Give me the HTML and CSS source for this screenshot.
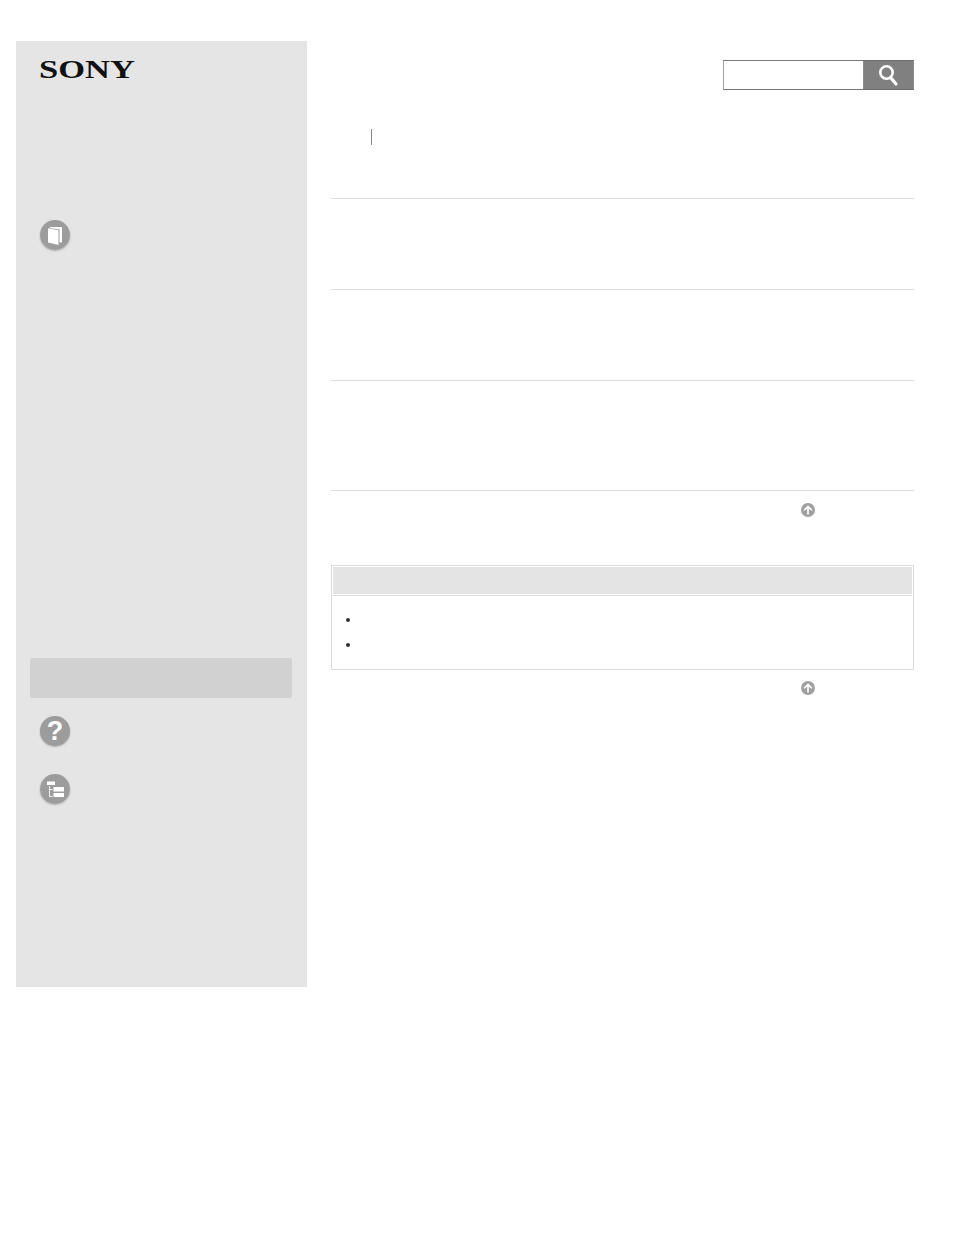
FILE: index.html
```html
<!DOCTYPE html>
<html lang="en">
<head>
    <meta charset="UTF-8">
    <meta name="viewport" content="width=device-width, initial-scale=1.0">
    <title>Help Guide</title>
    <link rel="stylesheet" href="styles.css">
</head>
<body>
    <div class="page">
        <div class="sidebar">
            <div class="logo">SONY</div>

            <div class="nav-icon nav-book">
                <svg width="30" height="30" viewBox="0 0 30 30">
                    <circle cx="15" cy="15" r="15" fill="#9c9c9c"/>
                    <path d="M10 7h12v15.500h-2.500V9.500L10 8z" fill="#ffffff"/>
                    <path d="M8 8.300 18.500 10.200V25L8 22.500z" fill="#ffffff"/>
                </svg>
            </div>

            <div class="side-bar-block"></div>

            <div class="nav-icon nav-help">
                <span class="help-mark">?</span>
            </div>

            <div class="nav-icon nav-tree">
                <svg width="30" height="30" viewBox="0 0 30 30">
                    <circle cx="15" cy="15" r="15" fill="#9c9c9c"/>
                    <rect x="7" y="7.500" width="8" height="3.500" fill="#ffffff"/>
                    <rect x="13.500" y="13" width="10.500" height="4.500" fill="#ffffff"/>
                    <rect x="13.500" y="19" width="10.500" height="4" fill="#ffffff"/>
                    <path d="M9.500 12v10.500h3M9.500 15.500h3" fill="none" stroke="#f0f0f0" stroke-width="1"/>
                </svg>
            </div>
        </div>

        <div class="main">
            <div class="search">
                <div class="search-input"></div>
                <div class="search-btn">
                    <svg width="22" height="24" viewBox="0 0 22 24">
                        <circle cx="8.500" cy="9.500" r="6.200" fill="none" stroke="#ffffff" stroke-width="2.600"/>
                        <path d="M13 15l5 6" stroke="#ffffff" stroke-width="3.200" stroke-linecap="round"/>
                    </svg>
                </div>
            </div>

            <div class="crumbs"><span class="crumb-divider"></span></div>

            <div class="topic topic-first"></div>
            <div class="topic"></div>
            <div class="topic topic-tall"></div>

            <div class="to-top">
                <svg width="14" height="14" viewBox="0 0 14 14">
                    <circle cx="7" cy="7" r="7" fill="#a0a0a0"/>
                    <path d="M7 11.500V3.500M3.200 7.200 7 3.400 10.800 7.200" fill="none" stroke="#ffffff" stroke-width="1.600"/>
                </svg>
            </div>

            <div class="note">
                <div class="note-head"></div>
                <ul class="note-list">
                    <li class="note-item"></li>
                    <li class="note-item"></li>
                </ul>
            </div>

            <div class="to-top to-top-last">
                <svg width="14" height="14" viewBox="0 0 14 14">
                    <circle cx="7" cy="7" r="7" fill="#a0a0a0"/>
                    <path d="M7 11.500V3.500M3.200 7.200 7 3.400 10.800 7.200" fill="none" stroke="#ffffff" stroke-width="1.600"/>
                </svg>
            </div>
        </div>
    </div>
</body>
</html>
```

FILE: styles.css
```css
body {
    margin: 0;
    background-color: #ffffff;
    font-family: "Liberation Sans", Arial, sans-serif;
    color: #333333;
}

.page {
    display: flex;
    gap: 24px;
    padding: 41px 40px 0 16px;
}

/* Sidebar */
.sidebar {
    width: 291px;
    height: 946px;
    flex-shrink: 0;
    background-color: #e5e5e5;
    box-sizing: border-box;
    padding: 17px 15px 0 14px;
}

.logo {
    height: 24px;
    margin-left: 9px;
    font-family: "Liberation Serif", serif;
    font-size: 25px;
    font-weight: bold;
    line-height: 24px;
    color: #111111;
    transform: scaleX(1.38);
    transform-origin: left center;
}

.nav-icon {
    width: 30px;
    height: 30px;
    margin-left: 10px;
    border-radius: 50%;
    box-shadow: 0 1px 2px rgba(0, 0, 0, 0.25);
}

.nav-book {
    margin-top: 138px;
}

.side-bar-block {
    height: 40px;
    margin-top: 408px;
    background-color: #d1d1d1;
    border-radius: 2px;
}

.nav-help {
    margin-top: 18px;
    background-color: #9c9c9c;
    text-align: center;
}

.help-mark {
    font-size: 27px;
    font-weight: bold;
    line-height: 30px;
    color: #ffffff;
}

.nav-tree {
    margin-top: 28px;
}

/* Main column */
.main {
    flex: 1;
    padding-top: 19px;
}

.search {
    display: flex;
    justify-content: flex-end;
    height: 30px;
}

.search-input {
    width: 140px;
    box-sizing: border-box;
    border: 1px solid #777777;
    border-left-color: #a0a0a0;
    border-right: none;
    background-color: #ffffff;
}

.search-btn {
    width: 51px;
    box-sizing: border-box;
    border: 1px solid #8c8c8c;
    border-top-color: #6c6c6c;
    border-bottom-color: #6c6c6c;
    background-color: #808080;
    display: flex;
    justify-content: center;
    align-items: center;
}

.crumbs {
    height: 16px;
    margin-top: 39px;
    padding-left: 40px;
}

.crumb-divider {
    display: block;
    width: 1px;
    height: 16px;
    background-color: #8a8a8a;
}

.topic {
    height: 90px;
    border-top: 1px solid #dcdcdc;
}

.topic-first {
    margin-top: 53px;
}

.topic-tall {
    height: 109px;
}

.to-top {
    border-top: 1px solid #dcdcdc;
    padding: 12px 0 0 470px;
    height: 14px;
}

.to-top svg {
    display: block;
}

.to-top-last {
    border-top: none;
    padding-top: 11px;
}

/* Note box */
.note {
    height: 105px;
    margin-top: 48px;
    box-sizing: border-box;
    border: 1px solid #dcdcdc;
}

.note-head {
    height: 27px;
    margin: 1px 1px 0;
    background-color: #e4e4e4;
    box-shadow: 0 1px 0 #ffffff, 0 2px 0 #dcdcdc;
}

.note-list {
    list-style: none;
    margin: 0;
    padding: 24px 0 0 14px;
}

.note-item {
    width: 4px;
    height: 4px;
    margin-bottom: 21px;
    background-color: #333333;
    border-radius: 50%;
}
```
